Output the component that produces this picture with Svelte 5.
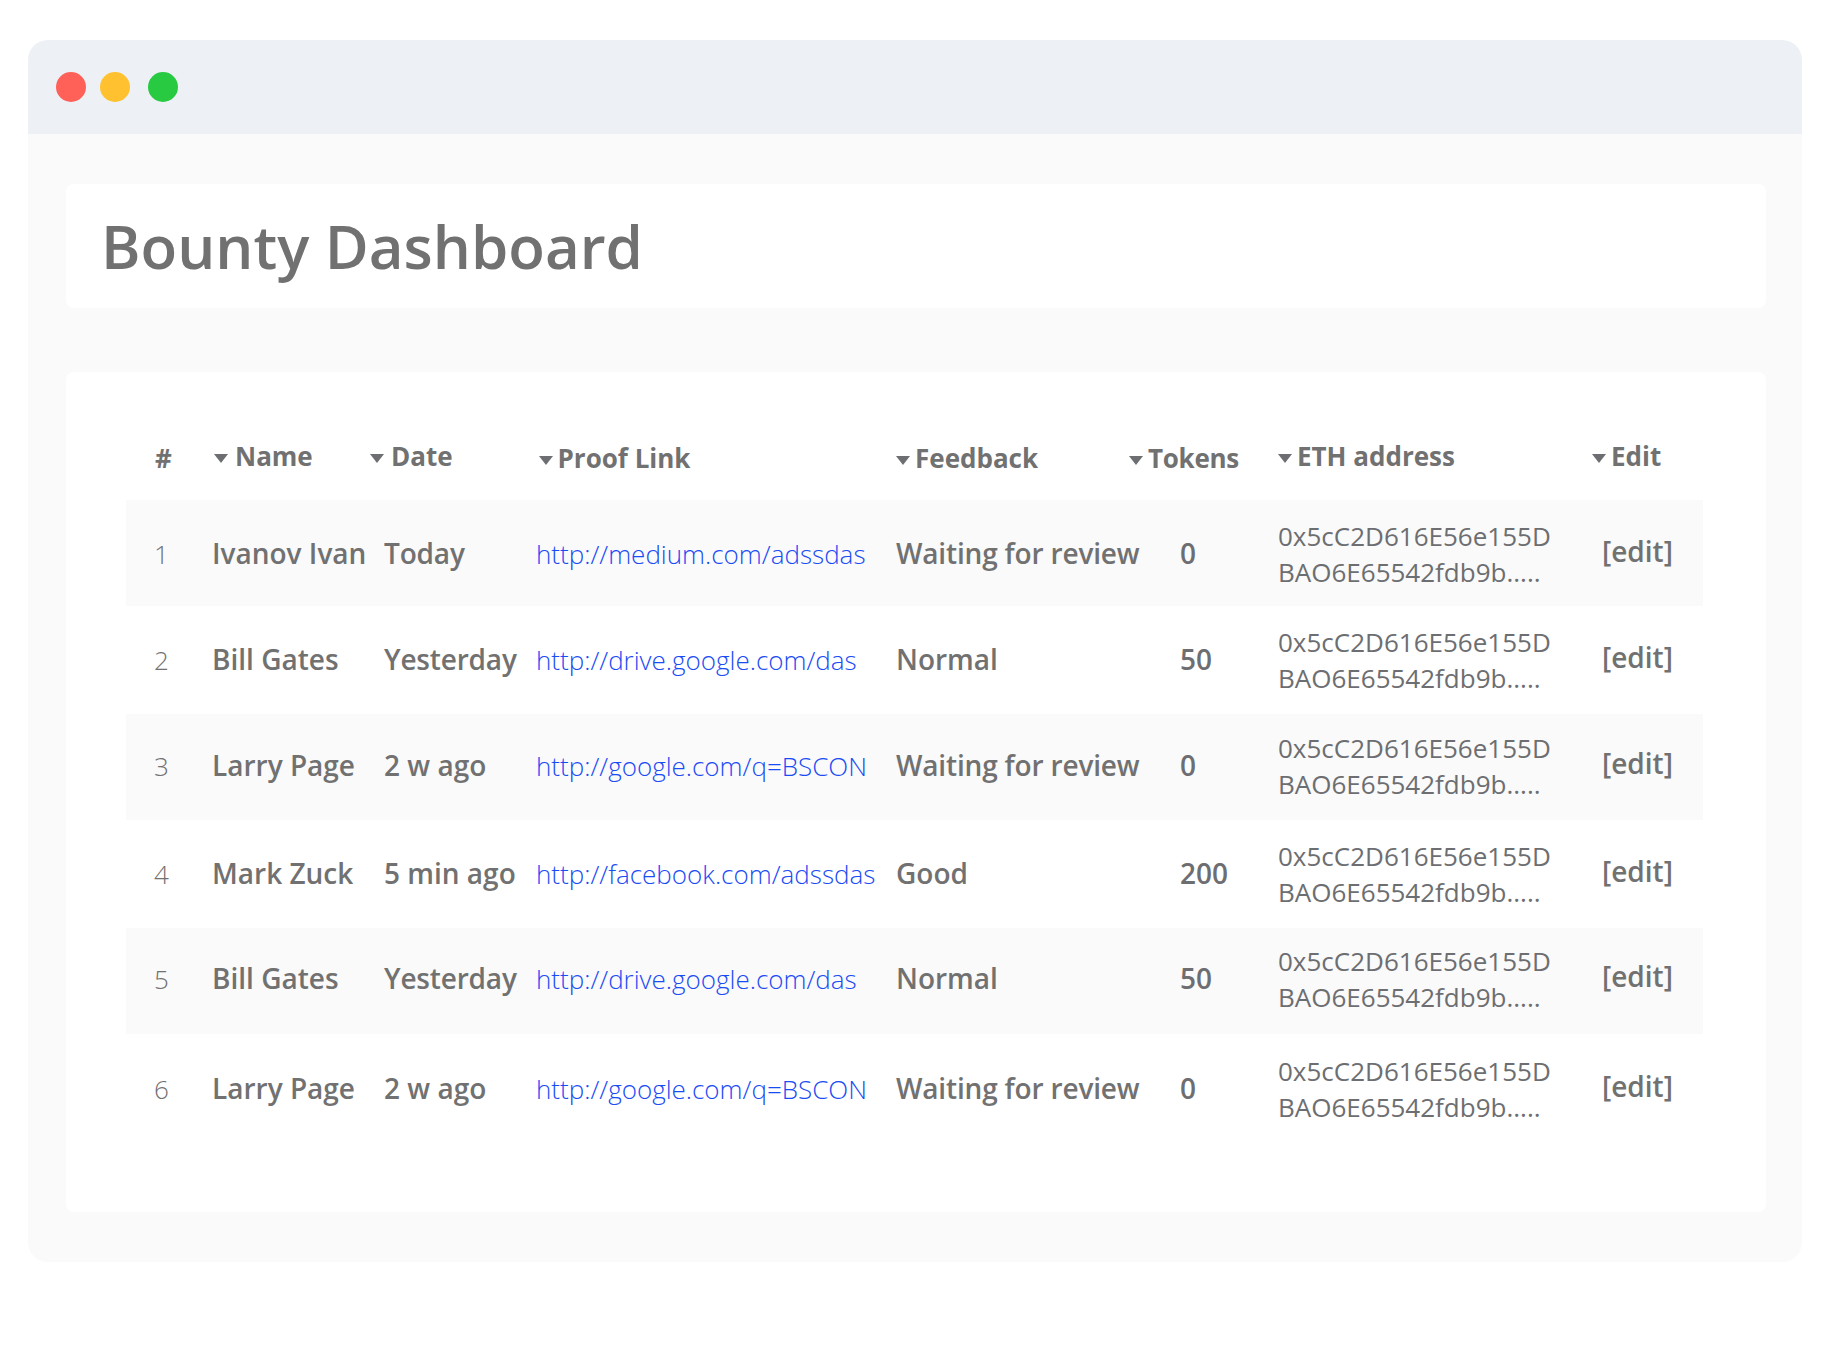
<script>
  const columns = [
    { key: 'name', label: 'Name' },
    { key: 'date', label: 'Date' },
    { key: 'link', label: 'Proof Link' },
    { key: 'feedback', label: 'Feedback' },
    { key: 'tokens', label: 'Tokens' },
    { key: 'eth', label: 'ETH address' },
    { key: 'edit', label: 'Edit' }
  ];

  const rows = [
    { name: 'Ivanov Ivan', date: 'Today', link: 'http://medium.com/adssdas', feedback: 'Waiting for review', tokens: 0 },
    { name: 'Bill Gates', date: 'Yesterday', link: 'http://drive.google.com/das', feedback: 'Normal', tokens: 50 },
    { name: 'Larry Page', date: '2 w ago', link: 'http://google.com/q=BSCON', feedback: 'Waiting for review', tokens: 0 },
    { name: 'Mark Zuck', date: '5 min ago', link: 'http://facebook.com/adssdas', feedback: 'Good', tokens: 200 },
    { name: 'Bill Gates', date: 'Yesterday', link: 'http://drive.google.com/das', feedback: 'Normal', tokens: 50 },
    { name: 'Larry Page', date: '2 w ago', link: 'http://google.com/q=BSCON', feedback: 'Waiting for review', tokens: 0 }
  ];

  const isTight = (text) => /^[TYW]/.test(text);
</script>

<div class="window">
  <header class="titlebar">
    <span class="dot close"></span>
    <span class="dot minimize"></span>
    <span class="dot zoom"></span>
  </header>

  <main>
    <section class="card heading">
      <h1>Bounty Dashboard</h1>
    </section>

    <section class="card table">
      <div class="head">
        <div class="th num">#</div>
        {#each columns as col}
          <div class="th {col.key}">
            <svg width="14" height="9" viewBox="0 0 14 9"><path d="M0 0H14L7 9Z" /></svg>
            <span>{col.label}</span>
          </div>
        {/each}
      </div>
      {#each rows as row, i}
        <div class="row">
          <div class="cell index">{i + 1}</div>
          <div class="cell strong">{row.name}</div>
          <div class="cell strong" class:tight={isTight(row.date)}>{row.date}</div>
          <div class="cell url">{row.link}</div>
          <div class="cell strong" class:tight={isTight(row.feedback)}>{row.feedback}</div>
          <div class="cell strong amount">{row.tokens}</div>
          <div class="cell address">0x5cC2D616E56e155D<br />BAO6E65542fdb9b.....</div>
          <div class="cell action">[edit]</div>
        </div>
      {/each}
    </section>
  </main>
</div>

<style>
  :global(body) {
    background: #fff;
  }
  .window {
    box-sizing: border-box;
    width: 1774px;
    height: 1222px;
    margin: 40px 0 0 28px;
    border-radius: 20px;
    overflow: hidden;
    background: #fafafa;
    color: #717171;
    font-family: 'Open Sans', 'Noto Sans', sans-serif;
  }
  :global(#app) {
    display: flow-root;
  }
  .titlebar {
    display: flex;
    align-items: center;
    height: 94px;
    padding-left: 28px;
    box-sizing: border-box;
    background: #edf0f5;
  }
  .dot {
    width: 30px;
    height: 30px;
    border-radius: 50%;
  }
  .close {
    background: #ff6058;
  }
  .minimize {
    margin-left: 14px;
    background: #ffc130;
  }
  .zoom {
    margin-left: 18px;
    background: #27ca40;
  }
  main {
    display: flex;
    flex-direction: column;
    gap: 64px;
    padding: 50px 36px 50px 38px;
  }
  .card {
    box-sizing: border-box;
    border-radius: 8px;
    background: #fff;
  }
  .heading {
    height: 124px;
    padding: 22px 0 0 35px;
  }
  h1 {
    margin: 0;
    font-size: 60px;
    font-weight: 600;
    line-height: 80px;
    white-space: nowrap;
  }
  .table {
    height: 840px;
    padding: 0 63px 0 60px;
  }
  .head {
    display: grid;
    grid-template-columns: 59px 156px 168.5px 357.5px 233px 149px 314px 1fr;
    height: 128px;
    padding: 66px 0 0 29px;
    box-sizing: border-box;
  }
  .th {
    display: flex;
    align-items: flex-start;
    font-size: 26px;
    font-weight: 700;
    line-height: 36px;
    white-space: nowrap;
  }
  .th svg {
    flex: none;
    margin: 16px 5px 0 0;
    fill: #6d6e71;
  }
  .num,
  .link,
  .feedback,
  .tokens {
    padding-top: 2px;
  }
  .name svg,
  .date svg {
    margin-right: 7px;
  }
  .tokens {
    letter-spacing: -0.3px;
  }
  .row {
    display: grid;
    grid-template-columns: 58px 172px 152px 360px 284px 98px 324px 1fr;
    height: 106px;
    padding: 18px 0 0 28px;
    box-sizing: border-box;
  }
  .row:nth-child(even) {
    background: #fafafa;
  }
  .row:nth-child(odd) {
    height: 108px;
  }
  .row:nth-child(4) {
    padding-top: 16px;
  }
  .row:nth-child(6) {
    padding-top: 15px;
  }
  .row:nth-child(7) {
    padding-top: 19px;
  }
  .cell {
    padding-top: 18px;
    font-size: 26px;
    line-height: 36px;
    white-space: nowrap;
  }
  .index {
    font-weight: 300;
  }
  .strong {
    padding-top: 17px;
    font-size: 28px;
    font-weight: 600;
  }
  .tight {
    letter-spacing: -0.17px;
  }
  .url {
    color: #1a4cf5;
    font-weight: 300;
  }
  .amount,
  .address {
    color: #6d6e71;
  }
  .address {
    padding-top: 0;
  }
  .action {
    padding-top: 15px;
    font-size: 28px;
    font-weight: 600;
  }
</style>
